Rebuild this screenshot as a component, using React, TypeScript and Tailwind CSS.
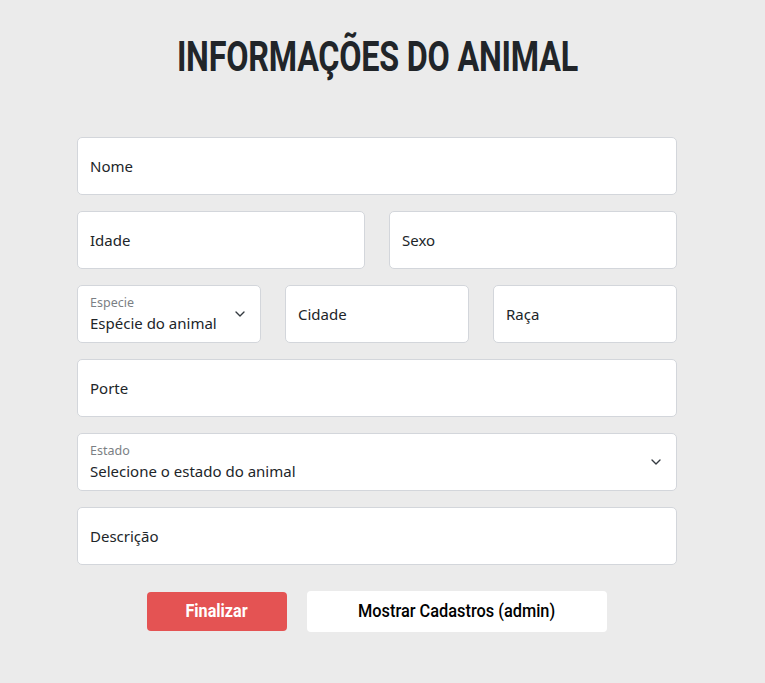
import { ChevronDown } from 'lucide-react';

const inputCls =
  'h-[58px] w-full rounded-[5px] border border-[#d3d6db] bg-white px-3 text-[15px] text-[#212529] placeholder:text-[#212529] outline-none';

function FloatSelect({ label, value }: { label: string; value: string }) {
  return (
    <div className="relative flex h-[58px] w-full flex-col justify-center rounded-[5px] border border-[#d3d6db] bg-white pl-3 pr-10">
      <span className="mt-[2px] text-[12.5px] leading-4 text-[#7b7f84]">{label}</span>
      <span className="whitespace-nowrap text-[15px] leading-6 text-[#212529]">{value}</span>
      <ChevronDown className="absolute right-[12px] top-[20px] h-4 w-4 text-[#343a40]" strokeWidth={2} />
    </div>
  );
}

export default function App() {
  return (
    <div className="min-h-[683px] bg-[#ebebeb] font-['Noto_Sans',sans-serif]">
      <div className="ml-[77px] flex w-[600px] flex-col pt-[33px]">
        <h1 className="text-center font-['Roboto',sans-serif] text-[42px] font-bold leading-[48px] text-[#212529]">
          <span className="inline-block scale-x-[0.77] tracking-[-0.3px]">INFORMAÇÕES DO ANIMAL</span>
        </h1>
        <form className="mt-[56px] flex flex-col gap-4">
          <input className={inputCls} placeholder="Nome" />
          <div className="grid grid-cols-2 gap-6">
            <input className={inputCls} placeholder="Idade" />
            <input className={inputCls} placeholder="Sexo" />
          </div>
          <div className="grid grid-cols-3 gap-6">
            <FloatSelect label="Especie" value="Espécie do animal" />
            <input className={inputCls} placeholder="Cidade" />
            <input className={inputCls} placeholder="Raça" />
          </div>
          <input className={inputCls} placeholder="Porte" />
          <FloatSelect label="Estado" value="Selecione o estado do animal" />
          <input className={inputCls} placeholder="Descrição" />
          <div className="mt-[10px] flex items-center justify-center gap-5">
            <button
              type="button"
              className="h-[39px] w-[140px] rounded-[4px] bg-[#e45353] font-['Roboto',sans-serif] text-[19px] font-bold text-white"
            >
              <span className="inline-block scale-x-[0.85]">Finalizar</span>
            </button>
            <button
              type="button"
              className="h-[41px] w-[300px] rounded-[4px] bg-white font-['Roboto',sans-serif] text-[19px] font-medium text-black"
            >
              <span className="inline-block scale-x-[0.86]">Mostrar Cadastros (admin)</span>
            </button>
          </div>
        </form>
      </div>
    </div>
  );
}
